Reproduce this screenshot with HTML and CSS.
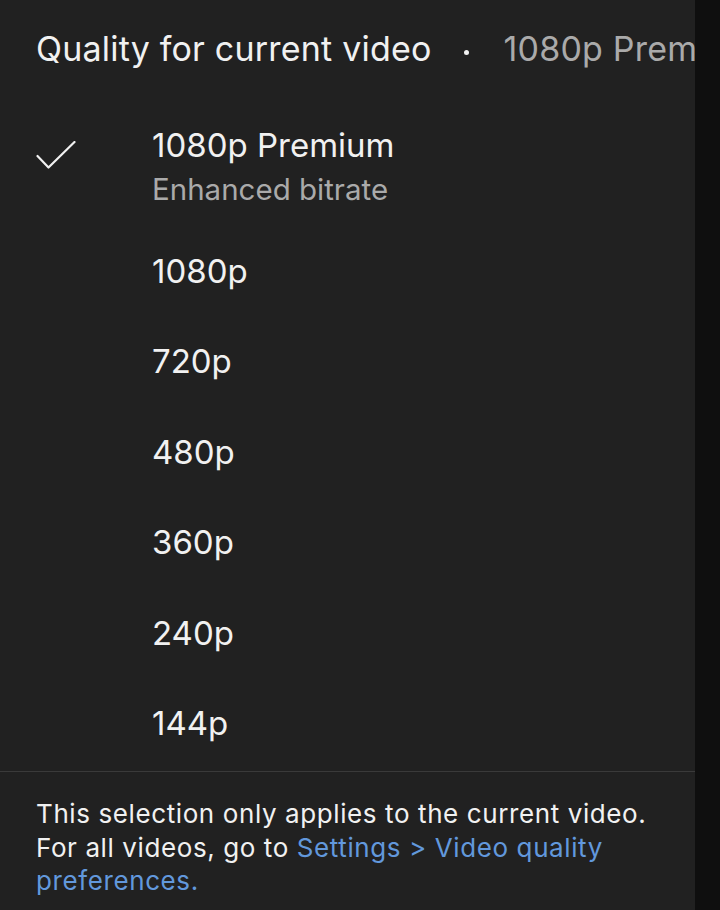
FILE: index.html
```html
<!DOCTYPE html>
<html lang="en">
<head>
<meta charset="utf-8">
<title>Quality for current video</title>
<link rel="stylesheet" href="styles.css">
</head>
<body>
<div class="screen">
  <div class="panel">
    <div class="header">
      <span class="title">Quality for current video</span>
      <span class="dot"></span>
      <span class="current">1080p Premium</span>
    </div>
    <div class="list">
      <div class="row row-selected">
        <svg class="check" width="40" height="30" viewBox="0 0 40 30">
          <polyline points="1.5,15 12.5,26.5 38.5,1" fill="none" stroke="#f1f1f1" stroke-width="2.2" stroke-linecap="round" stroke-linejoin="round"/>
        </svg>
        <div class="label-group">
          <div class="label">1080p Premium</div>
          <div class="sublabel">Enhanced bitrate</div>
        </div>
      </div>
      <div class="row"><span class="label">1080p</span></div>
      <div class="row"><span class="label">720p</span></div>
      <div class="row"><span class="label">480p</span></div>
      <div class="row"><span class="label">360p</span></div>
      <div class="row"><span class="label">240p</span></div>
      <div class="row"><span class="label">144p</span></div>
    </div>
    <div class="footer">
      <p class="note">This selection only applies to the current video.<br>For all videos, go to <a class="link" href="#">Settings &gt; Video quality preferences.</a></p>
    </div>
  </div>
  <div class="edge"></div>
</div>
</body>
</html>
```

FILE: styles.css
```css
* { box-sizing: border-box; }
html, body {
  margin: 0;
  padding: 0;
  background: #0f0f0f;
}
body {
  font-family: Inter, Roboto, "Liberation Sans", sans-serif;
  color: #f1f1f1;
}
.screen {
  display: flex;
  width: 720px;
  height: 910px;
  overflow: hidden;
}
.panel {
  width: 695px;
  flex: none;
  height: 910px;
  background: #212121;
  display: flex;
  flex-direction: column;
  overflow: hidden;
}
.edge {
  flex: 1;
  background: #0f0f0f;
}
.header {
  height: 110px;
  padding: 29px 0 0 36px;
  display: flex;
  align-items: flex-start;
  white-space: nowrap;
  font-size: 34px;
  line-height: 40px;
  letter-spacing: 0.2px;
}
.title {
  color: #f1f1f1;
}
.dot {
  width: 5px;
  height: 5px;
  border-radius: 50%;
  background: #f1f1f1;
  margin: 21px 35px 0 32px;
  flex: none;
}
.current {
  color: #aaaaaa;
}
.list {
  display: flex;
  flex-direction: column;
}
.row {
  height: 90.4px;
  display: flex;
  align-items: center;
  padding-left: 152px;
  font-size: 33px;
  line-height: 40px;
}
.row-selected {
  position: relative;
  height: 115.8px;
  align-items: flex-start;
  padding-top: 15px;
}
.check {
  position: absolute;
  left: 36px;
  top: 31px;
}
.label-group {
  display: flex;
  flex-direction: column;
  gap: 4px;
}
.label {
  color: #f1f1f1;
}
.sublabel {
  color: #aaaaaa;
  font-size: 29.5px;
  line-height: 40px;
}
.footer {
  margin-top: 3px;
  border-top: 1.5px solid #3a3a3a;
  padding: 25px 30px 0 36px;
}
.note {
  margin: 0;
  font-size: 26px;
  line-height: 33.5px;
  letter-spacing: 0.6px;
  color: #f1f1f1;
}
.link {
  color: #6298dc;
  text-decoration: none;
}
```
